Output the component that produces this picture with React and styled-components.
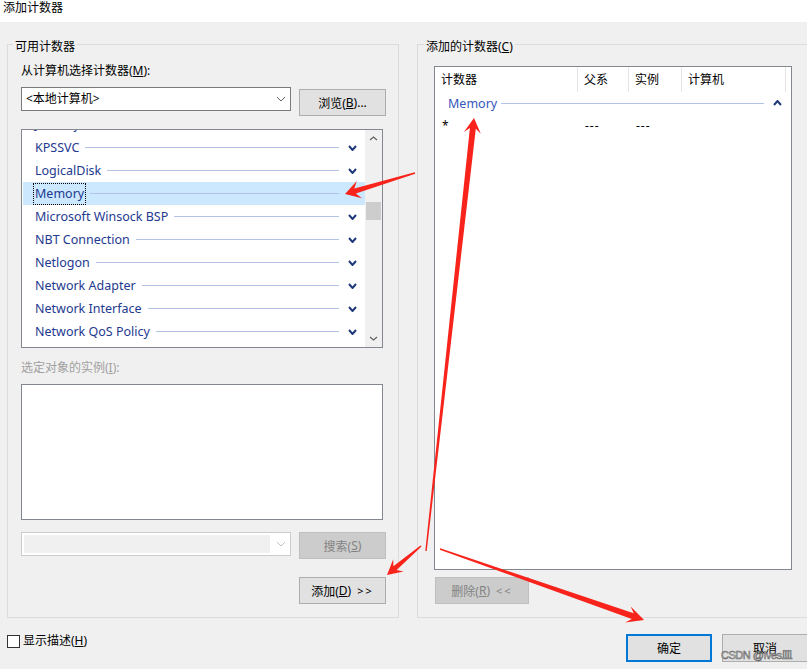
import React from 'react';
import styled, { createGlobalStyle } from 'styled-components';

const GlobalStyle = createGlobalStyle`
  html, body {
    margin: 0;
    padding: 0;
    background: #f0f0f0;
    overflow: hidden;
  }
  body {
    font-family: "Noto Sans", "Noto Sans CJK SC", sans-serif;
    font-size: 12px;
    color: #000;
  }
`;

const Window = styled.div`
  position: relative;
  width: 807px;
  height: 669px;
  overflow: hidden;
  background: #f0f0f0;
`;

const TitleBar = styled.div`
  height: 22px;
  background: #fff;
  padding-left: 3px;
  line-height: 16px;
`;

const Groups = styled.div`
  display: flex;
  gap: 18px;
  padding: 22px 0 0 7px;
`;

const GroupBox = styled.div`
  box-sizing: border-box;
  width: ${p => p.$w}px;
  height: 574px;
  flex-shrink: 0;
  border: 1px solid #dcdcdc;
  display: flex;
  flex-direction: column;
`;

const Legend = styled.div`
  align-self: flex-start;
  margin: -6px 0 0 ${p => p.$ml}px;
  padding: 0 2px;
  line-height: 16px;
  background: #f0f0f0;
`;

const GroupBody = styled.div`
  display: flex;
  flex-direction: column;
  align-items: flex-start;
  padding-left: ${p => p.$pl}px;
`;

const Label = styled.div`
  margin-top: ${p => p.$mt}px;
  line-height: 16px;
  color: ${p => (p.$disabled ? '#a0a0a0' : '#000')};
`;

const Row = styled.div`
  display: flex;
  align-items: flex-start;
  gap: 8px;
  margin-top: ${p => p.$mt}px;
`;

const Combo = styled.div`
  box-sizing: border-box;
  width: 270px;
  height: 24px;
  display: flex;
  align-items: stretch;
  background: #fff;
  border: 1px solid ${p => (p.$disabled ? '#cccccc' : '#7a7a7a')};
`;

const ComboText = styled.div`
  flex: 1;
  padding-left: 4px;
  line-height: 22px;
`;

const ComboFill = styled.div`
  flex: 1;
  margin: 2px;
  background: #f0f0f0;
`;

const ComboArrow = styled.div`
  width: 18px;
  display: flex;
  align-items: center;
  justify-content: center;
`;

const Button = styled.div`
  box-sizing: border-box;
  width: ${p => p.$w || 87}px;
  height: ${p => p.$h || 27}px;
  margin-top: ${p => p.$mt || 0}px;
  margin-left: ${p => p.$ml || 0}px;
  display: flex;
  align-items: center;
  justify-content: center;
  background: ${p => (p.$disabled ? '#cccccc' : '#e1e1e1')};
  border: ${p =>
    p.$default ? '2px solid #0078d7' : p.$disabled ? '1px solid #bfbfbf' : '1px solid #adadad'};
  color: ${p => (p.$disabled ? '#838383' : '#000')};
  white-space: nowrap;
`;

const Arrows = styled.span`
  letter-spacing: 2px;
  margin-left: 6px;
  font-size: 11px;
`;

const ListBox = styled.div`
  box-sizing: border-box;
  width: 362px;
  height: ${p => p.$h}px;
  margin-top: ${p => p.$mt}px;
  border: 1px solid #828790;
  background: #fff;
  display: flex;
  overflow: hidden;
`;

const ListRows = styled.div`
  flex: 1;
  padding-left: 1px;
  overflow: hidden;
`;

const ScrollOffset = styled.div`
  margin-top: -17px;
`;

const ListRow = styled.div`
  height: 23px;
  display: flex;
  align-items: center;
  padding-left: 10px;
  background: ${p => (p.$selected ? '#cce8ff' : 'transparent')};
`;

const ItemText = styled.span`
  padding: 0 1px;
  line-height: 20px;
  border: 1px ${p => (p.$focus ? 'dotted #000' : 'solid transparent')};
  color: #1e3a8f;
  font-size: 12.5px;
  white-space: nowrap;
`;

const Rule = styled.div`
  flex: 1;
  height: 1px;
  margin-left: 4px;
  background: #b3c2e6;
`;

const ChevronBox = styled.div`
  width: ${p => p.$w}px;
  display: flex;
  justify-content: center;
`;

const ScrollBar = styled.div`
  width: 17px;
  background: #f0f0f0;
  display: flex;
  flex-direction: column;
`;

const ScrollButton = styled.div`
  height: 17px;
  display: flex;
  align-items: center;
  justify-content: center;
`;

const ScrollTrack = styled.div`
  flex: 1;
`;

const Thumb = styled.div`
  margin: 55px 1px 0;
  height: 18px;
  background: #cdcdcd;
`;

const ButtonRow = styled.div`
  width: 365px;
  display: flex;
  justify-content: flex-end;
  margin-top: ${p => p.$mt}px;
`;

const ListView = styled.div`
  box-sizing: border-box;
  width: 358px;
  height: 504px;
  margin-top: 11px;
  border: 1px solid #828790;
  background: #fff;
`;

const Header = styled.div`
  display: flex;
  height: 25px;
`;

const HeaderCell = styled.div`
  box-sizing: border-box;
  width: ${p => p.$w}px;
  padding-left: 6px;
  line-height: 25px;
  border-right: 1px solid #e5e5e5;
`;

const GroupRow = styled.div`
  height: 22px;
  display: flex;
  align-items: center;
  padding-left: 13px;
`;

const GroupTitle = styled.span`
  color: #3656bd;
  font-size: 12.5px;
`;

const DataRow = styled.div`
  height: 22px;
  display: flex;
  align-items: center;
`;

const DataCell = styled.div`
  box-sizing: border-box;
  width: ${p => p.$w}px;
  padding-left: 7px;
  letter-spacing: ${p => (p.$dash ? '1px' : '0')};
`;

const Footer = styled.div`
  width: 808px;
  display: flex;
  align-items: flex-start;
  margin-top: 16px;
  padding-left: 7px;
  box-sizing: border-box;
`;

const CheckLabel = styled.label`
  display: flex;
  align-items: center;
  gap: 3px;
  line-height: 14px;
`;

const CheckBox = styled.span`
  box-sizing: border-box;
  width: 13px;
  height: 13px;
  border: 1px solid #333;
  background: #fff;
`;

const DialogButtons = styled.div`
  margin-left: auto;
  display: flex;
  gap: 10px;
`;

const Watermark = styled.div`
  position: absolute;
  left: 721px;
  top: 646px;
  font-family: "Liberation Sans", "Noto Sans CJK SC", sans-serif;
  font-size: 11px;
  letter-spacing: -0.5px;
  color: rgba(235, 235, 235, 0.7);
  -webkit-text-stroke: 0.6px rgba(70, 70, 70, 0.8);
  white-space: nowrap;
  pointer-events: none;
`;

const Overlay = styled.svg`
  position: absolute;
  left: 0;
  top: 0;
  pointer-events: none;
`;

const Chevron = ({ up, color = '#1f3a7a', w = 9, h = 6, sw = 2 }) => (
  <svg width={w} height={h} viewBox={`0 0 ${w} ${h}`}>
    <polyline
      points={up ? `1,${h - 1} ${w / 2},1 ${w - 1},${h - 1}` : `1,1 ${w / 2},${h - 1} ${w - 1},1`}
      fill="none"
      stroke={color}
      strokeWidth={sw}
    />
  </svg>
);

const counters = [
  'Job Object Details',
  'KPSSVC',
  'LogicalDisk',
  'Memory',
  'Microsoft Winsock BSP',
  'NBT Connection',
  'Netlogon',
  'Network Adapter',
  'Network Interface',
  'Network QoS Policy',
];

const arrows = [
  { from: [415, 173], to: [345, 194], w1: 5, len: 15, wide: 18 },
  { from: [426, 551], to: [474, 118], w1: 6, len: 15, wide: 17 },
  { from: [421, 546], to: [387, 575], w1: 5, len: 15, wide: 16 },
  { from: [440, 549], to: [644, 620], w1: 6, len: 17, wide: 17 },
];

function arrowPoints({ from, to, w1, len, wide }) {
  const [x0, y0] = from;
  const [x1, y1] = to;
  const d = Math.hypot(x1 - x0, y1 - y0);
  const ux = (x1 - x0) / d;
  const uy = (y1 - y0) / d;
  const nx = -uy;
  const ny = ux;
  const w0 = 1.4;
  const bx = x1 - ux * len * 0.7;
  const by = y1 - uy * len * 0.7;
  const wx = x1 - ux * len;
  const wy = y1 - uy * len;
  const pts = [
    [x0 + nx * w0 / 2, y0 + ny * w0 / 2],
    [bx + nx * w1 / 2, by + ny * w1 / 2],
    [wx + nx * wide / 2, wy + ny * wide / 2],
    [x1, y1],
    [wx - nx * wide / 2, wy - ny * wide / 2],
    [bx - nx * w1 / 2, by - ny * w1 / 2],
    [x0 - nx * w0 / 2, y0 - ny * w0 / 2],
  ];
  return pts.map(p => p.map(v => v.toFixed(1)).join(',')).join(' ');
}

export default function App() {
  return (
    <Window>
      <GlobalStyle />
      <TitleBar>添加计数器</TitleBar>

      <Groups>
        <GroupBox $w={392}>
          <Legend $ml={5}>可用计数器</Legend>
          <GroupBody $pl={13}>
            <Label $mt={8}>从计算机选择计数器(<u>M</u>):</Label>
            <Row $mt={8}>
              <Combo>
                <ComboText>&lt;本地计算机&gt;</ComboText>
                <ComboArrow>
                  <Chevron color="#606060" w={10} h={6} sw={1} />
                </ComboArrow>
              </Combo>
              <Button $mt={2}>浏览(<u>B</u>)...</Button>
            </Row>

            <ListBox $h={219} $mt={13}>
              <ListRows>
                <ScrollOffset>
                  {counters.map(name => {
                    const selected = name === 'Memory';
                    return (
                      <ListRow key={name} $selected={selected}>
                        <ItemText $focus={selected}>{name}</ItemText>
                        <Rule />
                        <ChevronBox $w={26}>{!selected && <Chevron />}</ChevronBox>
                      </ListRow>
                    );
                  })}
                </ScrollOffset>
              </ListRows>
              <ScrollBar>
                <ScrollButton>
                  <Chevron up color="#606060" w={9} h={5} sw={1.2} />
                </ScrollButton>
                <ScrollTrack>
                  <Thumb />
                </ScrollTrack>
                <ScrollButton>
                  <Chevron color="#606060" w={9} h={5} sw={1.2} />
                </ScrollButton>
              </ScrollBar>
            </ListBox>

            <Label $mt={12} $disabled>选定对象的实例(<u>I</u>):</Label>
            <ListBox $h={136} $mt={8} />

            <Row $mt={12}>
              <Combo $disabled>
                <ComboFill />
                <ComboArrow>
                  <Chevron color="#bfbfbf" w={10} h={6} sw={1} />
                </ComboArrow>
              </Combo>
              <Button $disabled>搜索(<u>S</u>)</Button>
            </Row>

            <ButtonRow $mt={18}>
              <Button>
                添加(<u>D</u>)<Arrows>&gt;&gt;</Arrows>
              </Button>
            </ButtonRow>
          </GroupBody>
        </GroupBox>

        <GroupBox $w={420}>
          <Legend $ml={6}>添加的计数器(<u>C</u>)</Legend>
          <GroupBody $pl={16}>
            <ListView>
              <Header>
                <HeaderCell $w={143}>计数器</HeaderCell>
                <HeaderCell $w={51}>父系</HeaderCell>
                <HeaderCell $w={53}>实例</HeaderCell>
                <HeaderCell $w={104}>计算机</HeaderCell>
              </Header>
              <GroupRow>
                <GroupTitle>Memory</GroupTitle>
                <Rule />
                <ChevronBox $w={27}>
                  <Chevron up />
                </ChevronBox>
              </GroupRow>
              <DataRow>
                <DataCell $w={143}>*</DataCell>
                <DataCell $w={51} $dash>---</DataCell>
                <DataCell $w={53} $dash>---</DataCell>
              </DataRow>
            </ListView>
            <Button $disabled $w={94} $mt={7} $ml={1}>
              删除(<u>R</u>)<Arrows>&lt;&lt;</Arrows>
            </Button>
          </GroupBody>
        </GroupBox>
      </Groups>

      <Footer>
        <CheckLabel>
          <CheckBox />
          <span>显示描述(<u>H</u>)</span>
        </CheckLabel>
        <DialogButtons>
          <Button $default $w={86} $h={28}>确定</Button>
          <Button $w={86} $h={28}>取消</Button>
        </DialogButtons>
      </Footer>

      <Watermark>CSDN @Ives皿</Watermark>

      <Overlay width="807" height="669">
        {arrows.map((a, i) => (
          <polygon key={i} points={arrowPoints(a)} fill="#f8231b" />
        ))}
      </Overlay>
    </Window>
  );
}
